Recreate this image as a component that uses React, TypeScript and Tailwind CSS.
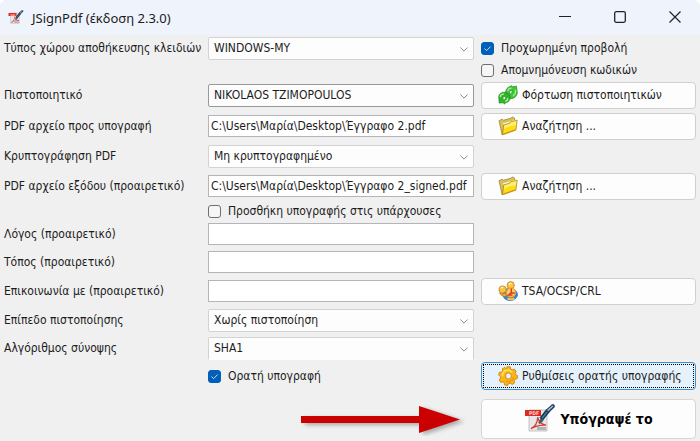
import { useState, type ReactNode } from 'react';
import clsx from 'clsx';

const ROW = 'grid grid-cols-[197px_minmax(0,1fr)_215px] items-center gap-x-[7px]';

function Row({ className, children }: { className: string; children: ReactNode }) {
  return <div className={clsx(ROW, className)}>{children}</div>;
}

function Label({ id, children }: { id: string; children: ReactNode }) {
  return (
    <label htmlFor={id} className="whitespace-nowrap">
      {children}
    </label>
  );
}

function Combo({ id, options, className }: { id: string; options: string[]; className?: string }) {
  return (
    <div className="relative">
      <select
        id={id}
        className={clsx(
          'block h-[23px] w-full appearance-none rounded-[2px] border bg-[#fdfdfd] pr-6 pl-[5px] focus:outline-none',
          className ?? 'border-[#d2d2d2]',
        )}
      >
        {options.map((o) => (
          <option key={o}>{o}</option>
        ))}
      </select>
      <svg
        viewBox="0 0 8 5"
        className="pointer-events-none absolute top-[10px] right-[6px] h-[5px] w-2"
        fill="none"
        stroke="#8a8a8a"
        strokeWidth="1"
      >
        <path d="M.4.5 4 4.1 7.6.5" />
      </svg>
    </div>
  );
}

function TextField({ id, value = '' }: { id: string; value?: string }) {
  const [text, setText] = useState(value);
  return (
    <input
      id={id}
      type="text"
      value={text}
      onChange={(e) => setText(e.target.value)}
      className="block h-[22px] w-full border border-[#b4b4ba] bg-white px-[2px] focus:outline-none"
    />
  );
}

function Check({ label, checked = false }: { label: string; checked?: boolean }) {
  const [on, setOn] = useState(checked);
  return (
    <label className="flex items-center gap-[7px] whitespace-nowrap">
      <span className="relative block size-[13px] shrink-0">
        <input
          type="checkbox"
          checked={on}
          onChange={(e) => setOn(e.target.checked)}
          className="block size-[13px] appearance-none rounded-[3px] border border-[#6e6e6e] bg-[#f6f6f6] checked:border-[#005fb8] checked:bg-[#005fb8]"
        />
        {on && (
          <svg
            viewBox="0 0 13 13"
            className="pointer-events-none absolute inset-0"
            fill="none"
            stroke="#cfe2f5"
            strokeWidth="1"
          >
            <path d="m3.6 6.6 2 2 4-4" />
          </svg>
        )}
      </span>
      {label}
    </label>
  );
}

function PushButton({ icon, children }: { icon: ReactNode; children: ReactNode }) {
  return (
    <button
      type="button"
      className="col-start-3 flex h-[27px] items-center gap-1 rounded-[4px] border border-[#d0d0d0] bg-[#fdfdfd] pl-4 whitespace-nowrap"
    >
      {icon}
      {children}
    </button>
  );
}

function LoadIcon() {
  return (
    <svg viewBox="0 0 20 20" className="size-5 shrink-0" strokeLinejoin="round">
      <g stroke="#1f7f1c" strokeWidth=".7">
        <path
          fill="#3fc93a"
          d="M8.4 10.300C6.600 6.200 8.600 1.900 12.500 1.600L13 .6l1.600 1.200 3.800-.6.600 4.300c1 3.500-.9 6.900-4.300 7.900l-3.400.2-3.700-2.500 2.200-.6Z"
        />
        <path
          fill="#2eb92b"
          d="M11.500 10.200c1.500 3.900-.4 7.200-4.200 7.600l-.7 1.300-1.500-1.400-3.900.4-.3-4.300c-.7-3 .5-5.500 3.600-6.400l3.300-.1 3.600 2.400Z"
        />
      </g>
      <path fill="#e6f9e2" stroke="#1f7f1c" strokeWidth=".6" d="m11.300 6.300 2.900-1.200-.3 3-2.300 1.300ZM4.700 12.200l2.900-1.100.1 2.700-2.200 1.500Z" />
      <path
        d="M9.800 6.300c.2-2 1.500-3.200 3.700-3.200m-11.300 9c.2-2 1.500-3.100 3.600-3.100m11.600-4.100c.7 2.700-.3 4.700-2.300 5.900m-5.200 2.300c-.1 1.700-1.200 2.800-2.700 3.100"
        fill="none"
        stroke="#9df28d"
        strokeWidth="1.400"
      />
    </svg>
  );
}

function FolderIcon() {
  return (
    <svg viewBox="0 0 20 20" className="size-5 shrink-0" strokeLinejoin="round">
      <path
        fill="#d9c15a"
        stroke="#8c7832"
        strokeWidth=".7"
        d="M1 4.700 4.200 3.200l1.300 1 7.500-2 1.200-1.300 2.300 1.200.4 2.700-10 4-2.800 9.800Z"
      />
      <path fill="#fffce5" d="M4.700 7.500 18.300 3.600l.2 3.200L6.300 9.600Z" />
      <path
        fill="#ffdc16"
        stroke="#a37e14"
        strokeWidth=".7"
        d="M4.400 18.800 5.700 8.900l5.900-1.700.9-1.400 6.700-1.600-1.300 9.900Z"
      />
      <path fill="#fff07a" d="m6.500 9.500 5.600-1.600.9-1.400 5.300-1.200-.7 4.300c-4.700.1-7.900 1.100-11.600 3.400Z" />
      <path d="m4.900 18.300 12.600-4.500" stroke="#c6920b" strokeWidth="1" />
    </svg>
  );
}

function TsaIcon() {
  return (
    <svg viewBox="0 0 20 20" className="size-5 shrink-0">
      <g stroke="#ad7210" strokeWidth=".7">
        <path
          fill="#2f89dc"
          stroke="#1d66ae"
          d="M4.800 14.500C4.200 10.500 7 7.500 11.500 7.500s8 2.600 8 6.500c-1 3.900-4 5.500-7.600 5.500-3.400 0-6-1.800-7.100-5Z"
        />
        <circle cx="12.700" cy="4.200" r="3.600" fill="#ffc540" />
        <circle cx="4.600" cy="8.600" r="3.700" fill="#f7c344" />
        <path fill="#f5b62f" d="M1.600 12.200c2 1.100 4.200.9 6-.2l.8 3.300c-2.700.2-5.300-.5-6.800-3.100Z" />
      </g>
      <path
        d="M10.800 3.600c.5-1.200 2-1.600 3-.8M2.600 7.600c.5-1.100 1.700-1.500 2.700-1"
        stroke="#fff0b8"
        strokeWidth="1.300"
        fill="none"
      />
      <circle cx="13" cy="11.600" r="4.500" fill="#ffcf70" stroke="#f0a02d" strokeWidth="1.200" />
      <path d="M13.300 7.600v4.400h3.500M13 11.900l-2.500 2.200h4" stroke="#dc3d1b" strokeWidth="1.500" fill="none" />
      <path d="M9.600 17.300c1.700 1.200 5 1.200 6.800 0" stroke="#ffc24b" strokeWidth="2.200" fill="none" />
    </svg>
  );
}

function GearIcon() {
  return (
    <svg viewBox="0 0 20 20" className="size-5 shrink-0">
      <path
        fill="#fbb615"
        fillRule="evenodd"
        stroke="#c87a08"
        strokeWidth=".8"
        strokeLinejoin="round"
        d="m8.400 2.800.7-2.200 3.200.3.400 2.200 1.500.8 2-.9 2 2.300-1 1.900.5 1.500 1.800.9-.3 3-2.100.6-.9 1.400.5 2.200-2.500 1.700-1.800-1.200-1.700.3-1.100 1.900-3.100-.6-.3-2.100-1.300-1-2.200.6-1.500-2.500 1.400-1.700-.1-1.600L.6 9.100l.8-2.900 2.200-.1 1-1.200-.2-2.200L7 1.400ZM10.400 6.900a2.900 3.100 0 1 0 .1 6.200 2.900 3.100 0 0 0-.1-6.200Z"
      />
      <path
        d="M4.600 10.300a5.300 5.300 0 0 1 9.500-4"
        stroke="#ffe25a"
        strokeWidth="1.700"
        fill="none"
      />
      <path d="M15.600 11.500a5.500 5.500 0 0 1-7.800 3.700" stroke="#ee9608" strokeWidth="1.300" fill="none" />
    </svg>
  );
}

function PdfPenIcon({ className }: { className: string }) {
  return (
    <svg viewBox="0 0 32 30" className={clsx('shrink-0', className)}>
      <path d="M5 6h18v21H5Z" fill="#e6e7e8" stroke="#b4b7b9" strokeWidth=".8" />
      <path d="M13 23h9v3h-9Z" fill="#b3b2b4" />
      <path d="M1 6h16v6H1Z" fill="#dd2922" />
      <text x="5" y="11" fill="#ffd5d0" fontSize="5" fontWeight="700">
        PDF
      </text>
      <path
        d="M7 24.700c3.900-2 6.500-6.400 6.700-11.500.8 4.600 3.400 7.100 8.200 8-5.100-.5-10.200.6-14.900 3.500Z"
        fill="none"
        stroke="#dc3a32"
        strokeWidth="1.300"
      />
      <path d="m14.200 18.700 2.300-4.500 3.100 2.500-3.900 3.200Z" fill="#555a61" />
      <path d="m17.200 15.200 7-8.800" stroke="#173855" strokeWidth="4.400" />
      <path d="m18 14.400 5.600-7.200" stroke="#4b82aa" strokeWidth="1.300" />
      <path d="m24 6.700 4.800-4.500" stroke="#24405c" strokeWidth="4" strokeLinecap="round" />
      <path d="m24.200 6.300 4.300-4" stroke="#9fc4de" strokeWidth="1.500" strokeLinecap="round" />
    </svg>
  );
}

function Arrow() {
  return (
    <svg viewBox="0 0 166 34" className="mr-[7px] h-[34px] w-[166px] justify-self-end">
      <g transform="translate(0 4)">
        <path
          d="M3 12h118V2l41 13.500-41 13.500V19H3Z"
          fill="#777"
          opacity=".6"
          transform="translate(1 0)"
          className="blur-[2px]"
        />
        <path d="M0 10h118V0l41 13.500-41 13.500V17H0Z" fill="#cb0000" />
      </g>
    </svg>
  );
}

function TitleBar() {
  return (
    <header className="flex h-[35px] items-center bg-[#eff3fb] pl-2">
      <PdfPenIcon className="h-[15px] w-4" />
      <h1 className="ml-2 font-['Noto_Sans',sans-serif] text-[13px]">JSignPdf (έκδοση 2.3.0)</h1>
      <div className="mr-[19px] mb-[2px] ml-auto flex items-center gap-[43px]">
        <button type="button" aria-label="Ελαχιστοποίηση">
          <svg viewBox="0 0 12 12" className="size-3" stroke="#222" strokeWidth="1.100">
            <path d="M0 5.500h12" />
          </svg>
        </button>
        <button type="button" aria-label="Μεγιστοποίηση">
          <svg viewBox="0 0 12 12" className="size-3" fill="none" stroke="#222" strokeWidth="1.300">
            <rect x=".7" y=".7" width="10.600" height="10.600" rx="1.500" />
          </svg>
        </button>
        <button type="button" aria-label="Κλείσιμο">
          <svg viewBox="0 0 12 12" className="size-3" stroke="#222" strokeWidth="1.200">
            <path d="m.5.5 11 11m0-11-11 11" />
          </svg>
        </button>
      </div>
    </header>
  );
}

export default function App() {
  return (
    <div className="min-h-screen overflow-hidden rounded-t-[7px] bg-[#f0f0f0] font-['DejaVu_Sans_Condensed','Noto_Sans',sans-serif] text-[12px] leading-4 text-[#1c1c1c]">
      <TitleBar />
      <form className="px-1 pt-px" onSubmit={(e) => e.preventDefault()}>
        <Row className="h-6">
          <Label id="keystore">Τύπος χώρου αποθήκευσης κλειδιών</Label>
          <Combo id="keystore" options={['WINDOWS-MY']} />
          <Check label="Προχωρημένη προβολή" checked />
        </Row>
        <Row className="h-5">
          <div className="col-start-3">
            <Check label="Απομνημόνευση κωδικών" />
          </div>
        </Row>
        <Row className="h-[30px]">
          <Label id="cert">Πιστοποιητικό</Label>
          <Combo id="cert" options={['NIKOLAOS TZIMOPOULOS']} className="border-[#999]" />
          <PushButton icon={<LoadIcon />}>Φόρτωση πιστοποιητικών</PushButton>
        </Row>
        <Row className="h-8">
          <Label id="input-pdf">PDF αρχείο προς υπογραφή</Label>
          <TextField id="input-pdf" value="C:\Users\Μαρία\Desktop\Έγγραφο 2.pdf" />
          <PushButton icon={<FolderIcon />}>Αναζήτηση ...</PushButton>
        </Row>
        <Row className="h-7">
          <Label id="encryption">Κρυπτογράφηση PDF</Label>
          <Combo id="encryption" options={['Μη κρυπτογραφημένο']} />
        </Row>
        <Row className="h-8">
          <Label id="output-pdf">PDF αρχείο εξόδου (προαιρετικό)</Label>
          <TextField id="output-pdf" value="C:\Users\Μαρία\Desktop\Έγγραφο 2_signed.pdf" />
          <PushButton icon={<FolderIcon />}>Αναζήτηση ...</PushButton>
        </Row>
        <Row className="h-[18px]">
          <div className="col-start-2">
            <Check label="Προσθήκη υπογραφής στις υπάρχουσες" />
          </div>
        </Row>
        <Row className="h-7">
          <Label id="reason">Λόγος (προαιρετικό)</Label>
          <TextField id="reason" />
        </Row>
        <Row className="h-7">
          <Label id="location">Τόπος (προαιρετικό)</Label>
          <TextField id="location" />
        </Row>
        <Row className="h-[30px]">
          <Label id="contact">Επικοινωνία με (προαιρετικό)</Label>
          <TextField id="contact" />
          <PushButton icon={<TsaIcon />}>TSA/OCSP/CRL</PushButton>
        </Row>
        <Row className="h-7">
          <Label id="level">Επίπεδο πιστοποίησης</Label>
          <Combo id="level" options={['Χωρίς πιστοποίηση']} />
        </Row>
        <Row className="h-7">
          <Label id="hash">Αλγόριθμος σύνοψης</Label>
          <Combo id="hash" options={['SHA1']} className="border-[#d2d2d2] border-b-transparent" />
        </Row>
        <Row className="h-7">
          <div className="col-start-2">
            <Check label="Ορατή υπογραφή" checked />
          </div>
          <button
            type="button"
            className="h-7 rounded-[4px] border border-[#3c8fd0] bg-[#e5f1fb] p-px whitespace-nowrap"
          >
            <span className="flex h-full items-center gap-1 border border-dotted border-black pl-[14px]">
              <GearIcon />
              Ρυθμίσεις ορατής υπογραφής
            </span>
          </button>
        </Row>
        <Row className="pt-[9px]">
          <div className="col-start-2 grid">
            <Arrow />
          </div>
          <button
            type="submit"
            className="flex h-10 items-center justify-center gap-1 rounded-[4px] border border-[#d6d6d6] bg-[#fdfdfd] font-['DejaVu_Sans_Condensed','DejaVu_Sans',sans-serif] text-[14px] font-bold whitespace-nowrap text-black"
          >
            <PdfPenIcon className="h-[30px] w-8" />
            Υπόγραψέ το
          </button>
        </Row>
      </form>
    </div>
  );
}
